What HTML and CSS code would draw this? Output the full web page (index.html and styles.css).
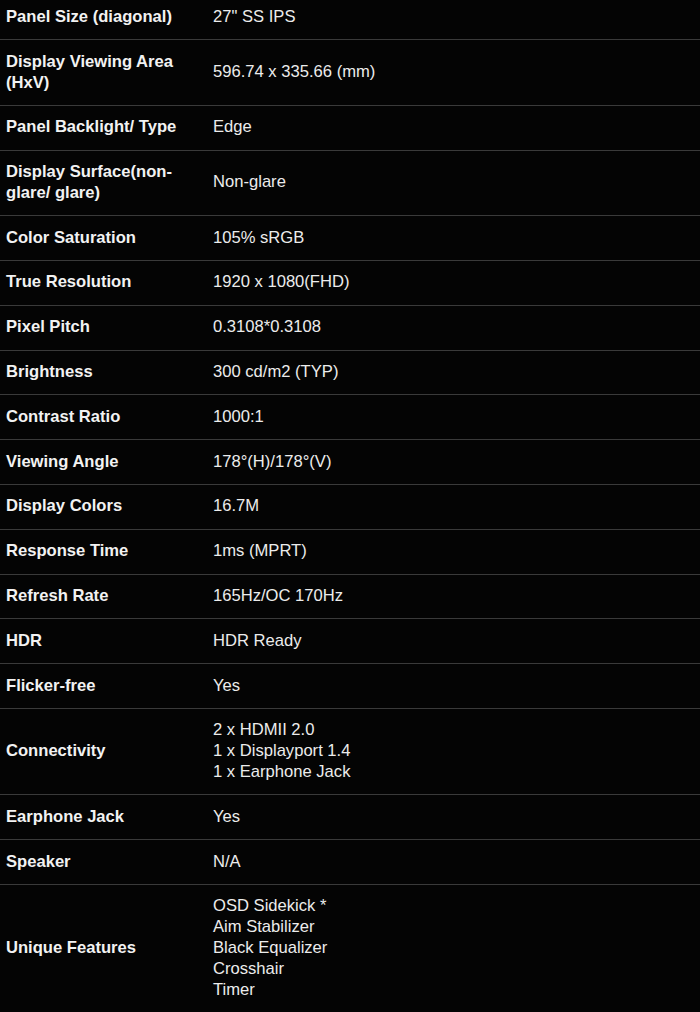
FILE: index.html
```html
<!DOCTYPE html>
<html>
<head>
<meta charset="utf-8">
<link rel="stylesheet" href="styles.css">
</head>
<body>
<table class="specs">
<tbody>
<tr><td class="k">Panel Size (diagonal)</td><td class="v">27" SS IPS</td></tr>
<tr><td class="k">Display Viewing Area<br>(HxV)</td><td class="v">596.74 x 335.66 (mm)</td></tr>
<tr><td class="k">Panel Backlight/ Type</td><td class="v">Edge</td></tr>
<tr><td class="k">Display Surface(non-<br>glare/ glare)</td><td class="v">Non-glare</td></tr>
<tr><td class="k">Color Saturation</td><td class="v">105% sRGB</td></tr>
<tr><td class="k">True Resolution</td><td class="v">1920 x 1080(FHD)</td></tr>
<tr><td class="k">Pixel Pitch</td><td class="v">0.3108*0.3108</td></tr>
<tr><td class="k">Brightness</td><td class="v">300 cd/m2 (TYP)</td></tr>
<tr><td class="k">Contrast Ratio</td><td class="v">1000:1</td></tr>
<tr><td class="k">Viewing Angle</td><td class="v">178°(H)/178°(V)</td></tr>
<tr><td class="k">Display Colors</td><td class="v">16.7M</td></tr>
<tr><td class="k">Response Time</td><td class="v">1ms (MPRT)</td></tr>
<tr><td class="k">Refresh Rate</td><td class="v">165Hz/OC 170Hz</td></tr>
<tr><td class="k">HDR</td><td class="v">HDR Ready</td></tr>
<tr><td class="k">Flicker-free</td><td class="v">Yes</td></tr>
<tr><td class="k">Connectivity</td><td class="v">2 x HDMII 2.0<br>1 x Displayport 1.4<br>1 x Earphone Jack</td></tr>
<tr><td class="k">Earphone Jack</td><td class="v">Yes</td></tr>
<tr><td class="k">Speaker</td><td class="v">N/A</td></tr>
<tr><td class="k">Unique Features</td><td class="v">OSD Sidekick *<br>Aim Stabilizer<br>Black Equalizer<br>Crosshair<br>Timer</td></tr>
</tbody>
</table>
</body>
</html>
```
FILE: styles.css
```css
html, body {
  margin: 0;
  padding: 0;
  background: #040404;
}
.specs {
  width: 700px;
  margin-top: -4.6px;
  border-collapse: collapse;
  font-family: "Liberation Sans", Arial, sans-serif;
  font-size: 16.6px;
  line-height: 20.8px;
}
.specs td {
  padding: 11.5px 6px;
  border-bottom: 1px solid #3a3a3a;
  vertical-align: middle;
}
.specs .k {
  width: 195px;
  font-weight: bold;
  color: #f2f2f2;
}
.specs .v {
  color: #ececec;
}
```
